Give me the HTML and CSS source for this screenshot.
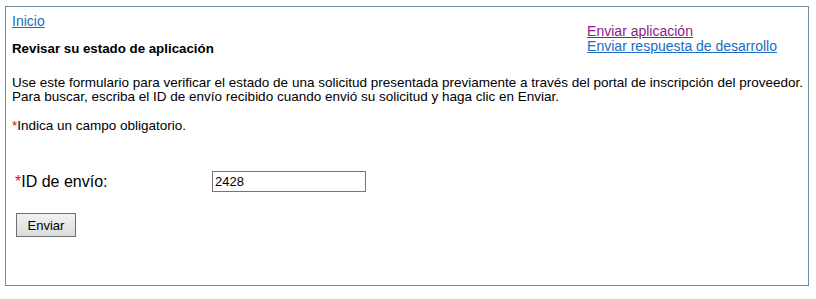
FILE: index.html
```html
<!DOCTYPE html>
<html lang="es">
<head>
<meta charset="utf-8">
<title>Revisar su estado de aplicación</title>
<link rel="stylesheet" href="styles.css">
</head>
<body>
<div class="panel">
  <div class="top">
    <div class="left">
      <a class="link" href="#">Inicio</a>
      <h1 class="title">Revisar su estado de aplicación</h1>
    </div>
    <div class="right">
      <a class="link visited" href="#">Enviar aplicación</a>
      <a class="link" href="#">Enviar respuesta de desarrollo</a>
    </div>
  </div>
  <p class="intro">Use este formulario para verificar el estado de una solicitud presentada previamente a través del portal de inscripción del proveedor.<br>Para buscar, escriba el ID de envío recibido cuando envió su solicitud y haga clic en Enviar.</p>
  <p class="req"><span class="star">*</span>Indica un campo obligatorio.</p>
  <div class="field">
    <label class="label" for="sid"><span class="star">*</span>ID de envío:</label>
    <input class="input" id="sid" type="text" value="2428">
  </div>
  <button class="btn" type="button">Enviar</button>
</div>
</body>
</html>
```
FILE: styles.css
```css
html, body {
  margin: 0;
  padding: 0;
  background: #ffffff;
}
body {
  font-family: "Liberation Sans", Arial, sans-serif;
  font-size: 13.5px;
  color: #000;
}
.panel {
  margin: 6px 0 0 5px;
  width: 802px;
  height: 278px;
  border: 1px solid #6f8c9b;
  padding: 0;
  box-sizing: content-box;
}
.top {
  display: flex;
  justify-content: space-between;
  padding: 7px 31px 0 6px;
}
.left {
  display: flex;
  flex-direction: column;
}
.link {
  font-size: 14px;
  color: #1a6bc4;
  text-decoration: underline;
  line-height: 15px;
}
.visited {
  color: #8b1a8b;
}
.title {
  font-size: 13.3px;
  font-weight: bold;
  margin: 12px 0 0 0;
  line-height: 15px;
}
.right {
  display: flex;
  flex-direction: column;
  padding-top: 10px;
}
.intro {
  margin: 20px 0 0 6px;
  line-height: 14px;
}
.req {
  margin: 15px 0 0 6px;
  line-height: 14px;
}
.star {
  color: #e01010;
}
.field {
  display: flex;
  align-items: center;
  margin: 38px 0 0 9px;
}
.label {
  font-size: 16px;
  width: 197px;
}
.input {
  width: 148px;
  height: 17px;
  border: 1px solid #767676;
  padding: 1px 2px;
  font-family: "Liberation Sans", Arial, sans-serif;
  font-size: 13px;
  margin: 0;
}
.btn {
  display: block;
  margin: 21px 0 0 10px;
  width: 60px;
  height: 24px;
  border: 1px solid #707070;
  background: linear-gradient(#f2f2f2, #dcdcdc);
  font-family: "Liberation Sans", Arial, sans-serif;
  font-size: 13px;
  color: #000;
  padding: 0;
}
```
